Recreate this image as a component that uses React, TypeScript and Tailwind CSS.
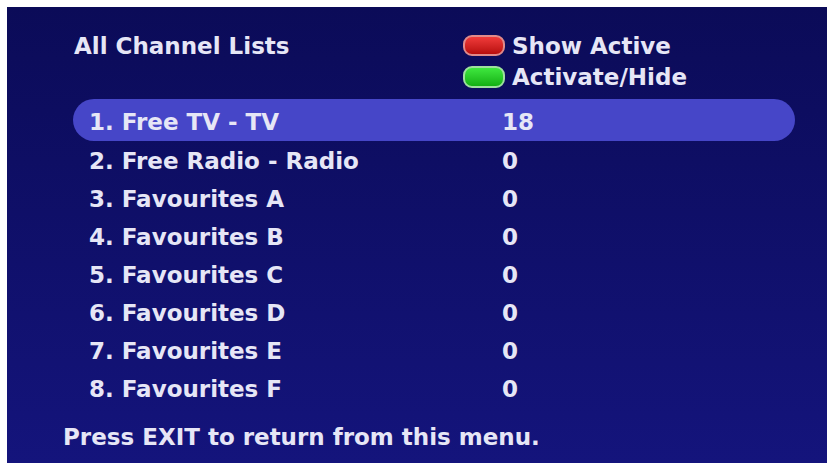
import React from "react";

const rows = [
  { label: "1. Free TV - TV", value: "18" },
  { label: "2. Free Radio - Radio", value: "0" },
  { label: "3. Favourites A", value: "0" },
  { label: "4. Favourites B", value: "0" },
  { label: "5. Favourites C", value: "0" },
  { label: "6. Favourites D", value: "0" },
  { label: "7. Favourites E", value: "0" },
  { label: "8. Favourites F", value: "0" },
];

export default function App() {
  return (
    <div className="w-[831px] h-[465px] bg-white pt-[7px] pl-[7px] overflow-hidden">
      <div className="w-[820px] h-[456px] bg-gradient-to-b from-[#0b0b58] to-[#14147c] font-['DejaVu_Sans',sans-serif] font-bold text-[23px] text-[#e6e6f6] flex flex-col">
        {/* Header */}
        <div className="flex pt-[24px] pl-[67px]">
          <div className="w-[389px] h-[31px] flex items-center leading-none">All Channel Lists</div>
          <div className="flex flex-col">
            <div className="h-[31px] flex items-center gap-[7px] leading-none">
              <span className="block w-[42px] h-[21px] -mt-[3px] rounded-[9px] border-2 border-[#e08a8a] bg-gradient-to-b from-[#f03a3a] to-[#b80c0c]" />
              <span>Show Active</span>
            </div>
            <div className="h-[31px] flex items-center gap-[7px] leading-none">
              <span className="block w-[42px] h-[22px] -mt-[1px] rounded-[9px] border-2 border-[#9ee09e] bg-gradient-to-b from-[#3ee83e] to-[#12b012]" />
              <span>Activate/Hide</span>
            </div>
          </div>
        </div>

        {/* List */}
        <div className="ml-[66px] w-[722px] mt-[6px] flex flex-col">
          {rows.map((r, i) => (
            <div
              key={r.label}
              className={
                i === 0
                  ? "h-[42px] pt-[5px] pl-[16px] flex items-center rounded-full bg-[#4646c8] leading-none"
                  : i === 1
                  ? "h-[38px] mt-[1px] pl-[16px] flex items-center leading-none"
                  : "h-[38px] pl-[16px] flex items-center leading-none"
              }
            >
              <span className="w-[413px]">{r.label}</span>
              <span>{r.value}</span>
            </div>
          ))}
        </div>

        {/* Footer */}
        <div className="ml-[56px] mt-[14px] h-[31px] flex items-center leading-none">
          Press EXIT to return from this menu.
        </div>
      </div>
    </div>
  );
}
